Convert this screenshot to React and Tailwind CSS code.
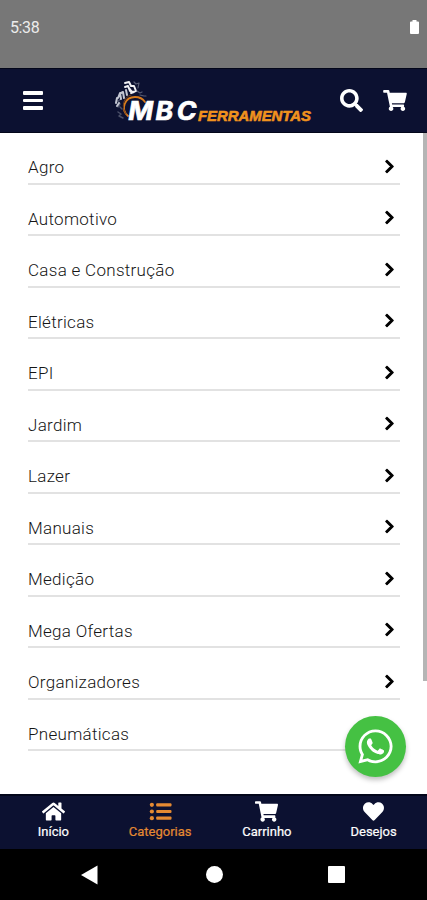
import React from 'react';
import { FaSearch, FaShoppingCart, FaChevronRight, FaHome, FaHeart, FaWhatsapp } from 'react-icons/fa';

const categories = [
  'Agro',
  'Automotivo',
  'Casa e Construção',
  'Elétricas',
  'EPI',
  'Jardim',
  'Lazer',
  'Manuais',
  'Medição',
  'Mega Ofertas',
  'Organizadores',
  'Pneumáticas',
];

const ListIcon = ({ className }) => (
  <svg viewBox="0 0 24 20" className={className} fill="currentColor">
    <circle cx="3" cy="3" r="2.2" />
    <circle cx="3" cy="10" r="2.2" />
    <circle cx="3" cy="17" r="2.2" />
    <rect x="7.5" y="1.5" width="16" height="3.2" rx="1" />
    <rect x="7.5" y="8.4" width="16" height="3.2" rx="1" />
    <rect x="7.5" y="15.3" width="16" height="3.2" rx="1" />
  </svg>
);

const tabs = [
  { label: 'Início', icon: FaHome },
  { label: 'Categorias', icon: ListIcon, active: true },
  { label: 'Carrinho', icon: FaShoppingCart },
  { label: 'Desejos', icon: FaHeart },
];

const Logo = () => (
  <svg width="210" height="54" viewBox="0 -4 210 54" className="shrink-0">
    {/* hand and gear */}
    <g fill="none" strokeLinecap="round" strokeLinejoin="round">
      <path d="M5 29l2-3-2-3 3-2-1-4M5 34l3 2-2 2 4 2M9 31l-2-2" stroke="#4b5068" strokeWidth="1.5" />
      <path d="M3 25l1-5M5 20l2-5 1 6M8 15l2-1 1 6M13 12l1 5M4 28l2-3" stroke="#c3c6d2" strokeWidth="2" />
      <path d="M12 9l3-1 2 5M12 5l4-1 2 4 3 0 2 5-4 1-3-4M18 15l3-1" stroke="#f0f0f4" strokeWidth="2" />
      <path d="M21 4l2 2 3-1-1 5M24 13l3 2 2-1M27 17l4 1 2 0" stroke="#565b74" strokeWidth="1.2" />
      <path d="M15 38C7 31 12 19 22 19c5 0 8 2 10 5" stroke="#d97c1c" strokeWidth="1.8" />
      <path d="M13 36C8 29 10 19 18 17" stroke="#70401f" strokeWidth="1" />
    </g>
    <text x="14.2 39.8 59.6" y="42.5" transform="scale(1.07 1)" fill="#fff" stroke="#fff" strokeWidth=".7" className="font-['Inter',sans-serif] text-[25px] font-bold italic">MBC</text>
    <text x="85" y="43" textLength="113" lengthAdjust="spacingAndGlyphs" fill="#f0921e" stroke="#f0921e" strokeWidth=".6" className="font-['Liberation_Sans',sans-serif] text-[15.5px] font-bold italic">FERRAMENTAS</text>
  </svg>
);

const App = () => {
  return (
    <div className="relative flex h-[900px] w-[427px] flex-col overflow-hidden bg-white font-['Roboto',sans-serif]">
      <div className="flex h-[68px] shrink-0 items-start justify-between bg-[#777777] pl-[10px] pr-2">
        <span className="mt-[17px] text-[16px] leading-[22px] tracking-[-0.4px] text-[#ececec]">5:38</span>
        <svg width="9" height="15" viewBox="0 0 9 15" className="mt-5" fill="#fff">
          <path d="M2.5 0h4v1.5H8a1 1 0 0 1 1 1V13a1 1 0 0 1-1 1H1a1 1 0 0 1-1-1V2.5a1 1 0 0 1 1-1h1.5z" />
        </svg>
      </div>

      <header className="flex h-[65px] shrink-0 items-center border-y border-[#03061a] bg-[#0c1131] pl-[23px] pr-5 text-white">
        <div className="flex w-5 flex-col gap-1">
          <div className="h-[3.5px] rounded-[1px] bg-white" />
          <div className="h-[3.5px] rounded-[1px] bg-white" />
          <div className="h-[3.5px] rounded-[1px] bg-white" />
        </div>
        <div className="ml-[70px]">
          <Logo />
        </div>
        <FaSearch className="ml-[17px] h-[23px] w-[23px] shrink-0" />
        <FaShoppingCart className="ml-5 h-[21px] w-[24px] shrink-0" />
      </header>

      <main className="flex min-h-0 flex-1 justify-between">
        <ul className="ml-7 w-[372px]">
          {categories.map((name) => (
            <li key={name} className="flex h-[51.5px] items-end justify-between border-b-2 border-[#e2e2e2] pb-1 pr-[5px]">
              <span className="mb-[0.5px] text-[17px] font-light leading-[22px] tracking-[0.3px] text-[#151515]">{name}</span>
              <FaChevronRight className="mb-[5px] h-[15px] w-[11px] stroke-black stroke-[30px] text-black" />
            </li>
          ))}
        </ul>
        <div className="h-[548px] w-1 bg-[#b5b5b5]" />
      </main>

      <button className="absolute left-[345px] top-[716px] flex h-[61px] w-[61px] items-center justify-center rounded-full bg-[#45c143] text-white shadow-[0_3px_5px_rgba(0,0,0,0.25)]">
        <FaWhatsapp className="h-[39px] w-[39px]" />
      </button>

      <nav className="grid h-[55px] shrink-0 grid-cols-4 border-t-2 border-[#03061a] bg-[#0c1131]">
        {tabs.map(({ label, icon: Icon, active }) => (
          <div key={label} className={active ? 'flex flex-col items-center pt-[5px] text-[#e58a32]' : 'flex flex-col items-center pt-[5px] text-white'}>
            <Icon className="h-[21px] w-[23px]" />
            <span className="mt-0.5 text-[13px] leading-4 [-webkit-text-stroke:0.2px]">{label}</span>
          </div>
        ))}
      </nav>

      <div className="flex h-[51px] shrink-0 items-center bg-black pl-[81px]">
        <svg width="18" height="20" viewBox="0 0 18 20" fill="#fff">
          <path d="M0 10L16.5 .5v19z" />
        </svg>
        <div className="ml-[107px] h-[17px] w-[17px] rounded-full bg-white" />
        <div className="ml-[105px] h-[17px] w-[17px] rounded-[1px] bg-white" />
      </div>
    </div>
  );
};

export default App;
